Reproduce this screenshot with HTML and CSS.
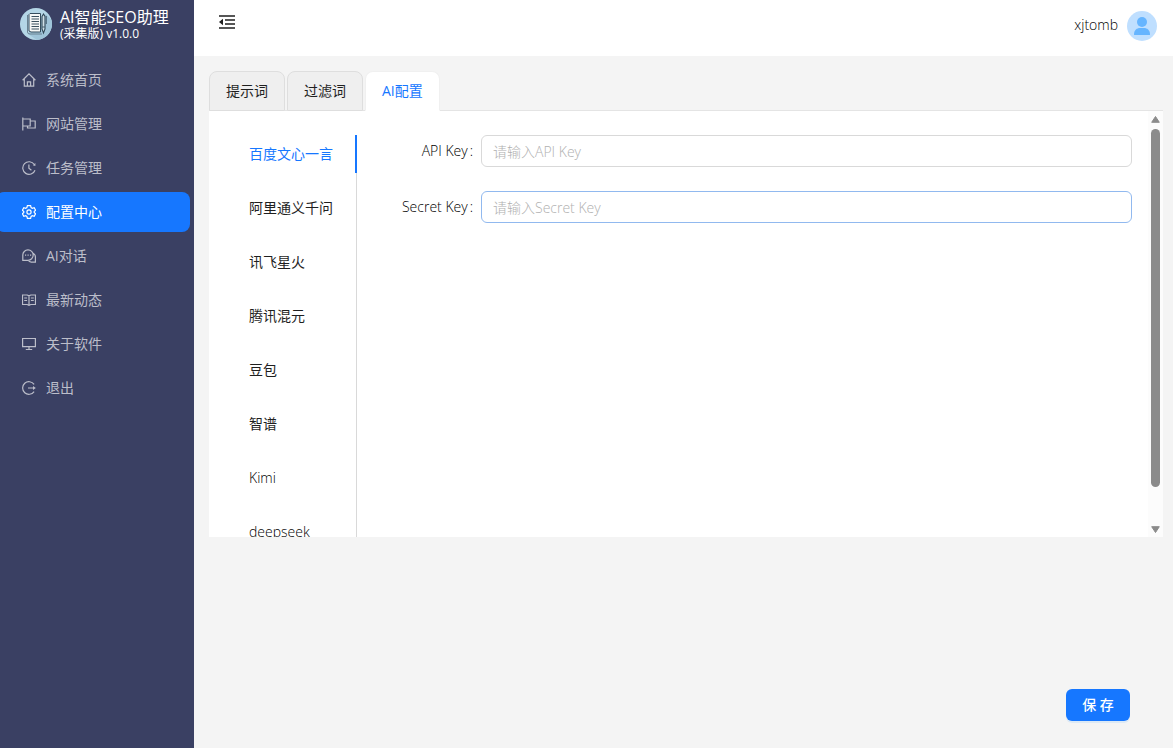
FILE: index.html
```html
<!DOCTYPE html>
<html lang="zh-CN">
<head>
<meta charset="utf-8">
<title>AI智能SEO助理</title>
<link rel="stylesheet" href="styles.css">
</head>
<body>
<div class="app">
  <aside class="sidebar">
    <div class="brand">
      <svg class="logo" viewBox="0 0 32 32" aria-hidden="true">
        <circle cx="16" cy="16" r="16" fill="#b4d6e6"/>
        <path d="M26 6l5.500 6A16 16 0 0 1 17 32l-9-6z" fill="#9fc4d9"/>
        <path d="M10 5.500h10.500V24H11l-2-1V6.500z" fill="#f6f8f7" stroke="#344c5c" stroke-width="1"/>
        <path d="M7.500 7v17q0 2 2.500 2h12" fill="none" stroke="#6b8291" stroke-width="1"/>
        <path d="M11.500 8.500h7.500M11.500 11h7.500M11.500 13.500h7.500M11.500 16h7.500M11.500 18.500h7.500M11.500 21h7.500" stroke="#3c5260"/>
        <path d="M22 8.500L23.500 6 25 8.500V21l-1.500 4L22 21z" fill="#cfe0e8" stroke="#2f4655" stroke-width="1.100"/>
        <path d="M26.300 8v8M22 19h3" stroke="#455f70"/>
      </svg>
      <div class="brand-text">
        <div class="brand-name">AI智能SEO助理</div>
        <div class="brand-version">(采集版) v1.0.0</div>
      </div>
    </div>
    <nav class="menu">
      <a class="menu-item" href="#home">
        <svg class="icon" viewBox="0 0 14 14"><path d="M.6 7.200L7 .9l6.400 6.300M2.300 6v7.200h9.400V6M5.400 13V8.800h3.200V13"/></svg>系统首页</a>
      <a class="menu-item" href="#sites">
        <svg class="icon" viewBox="0 0 14 14"><path d="M.8.500v13M.8 2h7.400v7H.8M8.200 4h5v7H5.500V9"/></svg>网站管理</a>
      <a class="menu-item" href="#tasks">
        <svg class="icon" viewBox="0 0 14 14"><path d="M12.300 3.500A6.300 6.300 0 1 0 13 9.200M6.900 3.500v3.800l2.500 1.900"/><path class="fill" d="M13.400 1.900v3.200l-2.600-.8z"/></svg>任务管理</a>
      <a class="menu-item active" href="#config">
        <svg class="icon" viewBox="0 0 14 14"><path d="M5.400.6h3.200l.5 2 1.200.7 1.900-.6 1.400 2.500-1.400 1.300v1l1.400 1.300-1.400 2.500-1.900-.6-1.200.7-.5 2H5.400l-.5-2-1.200-.7-1.900.6L.4 8.800l1.400-1.300v-1L.4 5.200l1.400-2.500 1.900.6 1.200-.7z"/><circle cx="7" cy="7" r="2.100"/></svg>配置中心</a>
      <a class="menu-item" href="#chat">
        <svg class="icon" viewBox="0 0 14 14"><path d="M.8 11.300V6.200a5.200 5.200 0 1 1 5.200 5.100H.8zM11.200 4.300a4.300 4.300 0 0 1 2.200 4v4.800H9.200q-2 0-3-1.800"/><path d="M3 6.200h1.200M5.500 6.200h1.200M8 6.200h1.200"/></svg>AI对话</a>
      <a class="menu-item" href="#news">
        <svg class="icon" viewBox="0 0 14 14"><path d="M.5 2h4.700L7 2.800 8.800 2h4.700v9.500H8.800L7 12.300l-1.800-.8H.5zM7 2.800v9.500M2.200 5h2.900M2.200 7.500h2.900M8.900 5h2.900M8.900 7.500h2.900"/></svg>最新动态</a>
      <a class="menu-item" href="#about">
        <svg class="icon" viewBox="0 0 14 14"><path d="M.6 1.500h12.800v8.200H.6zM7 9.700v2.800M3.800 12.500h6.400"/></svg>关于软件</a>
      <a class="menu-item" href="#exit">
        <svg class="icon" viewBox="0 0 14 14"><path d="M12.100 3.400a6.300 6.300 0 1 0 0 7.200M6 7h6"/><path class="fill" d="M11 5l2.800 2-2.800 2z"/></svg>退出</a>
    </nav>
  </aside>
  <div class="main">
    <header class="topbar">
      <button class="fold" type="button" aria-label="收起菜单">
        <svg viewBox="0 0 16 14"><path d="M0 1h16M6 5h10M6 9h10M0 13h16" stroke="#1f1f1f" stroke-width="1.400"/><path d="M4 3.800v6.400L0 7z" fill="#1f1f1f"/></svg>
      </button>
      <div class="user">
        <span class="user-name">xjtomb</span>
        <svg class="avatar" viewBox="0 0 30 30" aria-hidden="true"><circle cx="15" cy="15" r="15" fill="#bfdfff"/><circle cx="15" cy="11" r="5" fill="#66b5ff"/><path d="M7 23.500c0-4.500 3-6.500 6-6.500h4c3 0 6 2 6 6.500q0 .5-.5.500h-15q-.5 0-.5-.5z" fill="#66b5ff"/></svg>
      </div>
    </header>
    <main class="content">
      <div class="tabs" role="tablist">
        <button class="tab" type="button" role="tab">提示词</button>
        <button class="tab" type="button" role="tab">过滤词</button>
        <button class="tab current" type="button" role="tab" aria-selected="true">AI配置</button>
      </div>
      <section class="panel">
        <div class="panel-body">
          <div class="providers" role="tablist">
            <button class="provider chosen" type="button" role="tab" aria-selected="true">百度文心一言</button>
            <button class="provider" type="button" role="tab">阿里通义千问</button>
            <button class="provider" type="button" role="tab">讯飞星火</button>
            <button class="provider" type="button" role="tab">腾讯混元</button>
            <button class="provider" type="button" role="tab">豆包</button>
            <button class="provider" type="button" role="tab">智谱</button>
            <button class="provider light" type="button" role="tab">Kimi</button>
            <button class="provider light" type="button" role="tab">deepseek</button>
          </div>
          <form class="form" id="keys">
            <div class="field">
              <label class="light" for="api-key">API Key<span class="colon">:</span></label>
              <input id="api-key" type="text" placeholder="请输入API Key">
            </div>
            <div class="field">
              <label class="light" for="secret-key">Secret Key<span class="colon">:</span></label>
              <input class="highlight" id="secret-key" type="text" placeholder="请输入Secret Key">
            </div>
          </form>
        </div>
        <div class="scrollbar" aria-hidden="true">
          <svg class="arrow" viewBox="0 0 9 7"><path d="M4.500.5L8.300 6.300H.7z"/></svg>
          <div class="track"><div class="thumb"></div></div>
          <svg class="arrow" viewBox="0 0 9 7"><path d="M4.500 6.500L.7.700h7.600z"/></svg>
        </div>
      </section>
      <div class="actions"><button class="save" type="submit" form="keys">保 存</button></div>
    </main>
  </div>
</div>
</body>
</html>
```
FILE: styles.css
```css
* { box-sizing: border-box; }
body {
  margin: 0;
  font-family: "Open Sans", "Noto Sans CJK SC", sans-serif;
  font-size: 14px;
  line-height: 22px;
  color: #1f1f1f;
}
button, input { font: inherit; color: inherit; }
button { border: 0; background: none; padding: 0; cursor: pointer; }
.app { display: flex; min-height: 100vh; background: #f4f4f4; }
.light, .user-name { font-weight: 300; color: #000; }

.sidebar { flex: 0 0 194px; background: #3a4063; overflow: hidden; }
.brand { display: flex; gap: 8px; height: 48px; padding: 8px 0 0 20px; color: #fff; white-space: nowrap; }
.logo { width: 32px; height: 32px; }
.brand-name { font-size: 16px; line-height: 18px; }
.brand-version { font-size: 12px; line-height: 16px; }
.menu { display: flex; flex-direction: column; gap: 4px; padding: 12px 4px 0 0; margin-left: -4px; }
.menu-item {
  display: flex; align-items: center; gap: 10px;
  height: 40px; padding-left: 26px;
  border-radius: 8px; color: #bcbeca; text-decoration: none;
}
.menu-item.active { background: #1677ff; color: #fff; }
.icon { width: 14px; height: 14px; fill: none; stroke: currentColor; stroke-width: 1.2; }
.icon .fill { fill: currentColor; stroke: none; }

.main { flex: 1; min-width: 0; display: flex; flex-direction: column; }
.topbar {
  display: flex; justify-content: space-between; align-items: center;
  height: 56px; padding: 0 16px 4px 25px; background: #fff;
}
.fold { display: flex; padding-bottom: 8px; }
.fold svg { width: 16px; height: 14px; }
.user { display: flex; align-items: center; gap: 9px; }
.user-name { padding-bottom: 3px; }
.avatar { width: 30px; height: 30px; }

.content { flex: 1; display: flex; flex-direction: column; padding: 15px 10px 27px 15px; }
.tabs { display: flex; gap: 2px; height: 40px; border-bottom: 1px solid #e4e4e4; }
.tab {
  height: 40px; padding: 0 16px;
  border: 1px solid #dedede; border-radius: 8px 8px 0 0; background: #efefef;
}
.tab.current { border-color: #f0f0f0 #f0f0f0 #fff; background: #fff; color: #1677ff; }

.panel { display: flex; height: calc(100vh - 322px); background: #fff; overflow: hidden; }
.panel-body { flex: 1; display: flex; align-items: flex-start; padding: 24px 16px; }
.providers { display: flex; flex-direction: column; gap: 16px; border-right: 1px solid #d9d9d9; }
.provider { height: 38px; padding: 0 23px 0 24px; text-align: left; }
.provider.chosen { margin-right: -1px; padding-right: 22px; border-right: 2px solid #1677ff; color: #1677ff; }
.form { flex: 1; display: flex; flex-direction: column; gap: 24px; padding-left: 24px; }
.field { display: grid; grid-template-columns: 100px 1fr; align-items: center; }
.field label { text-align: right; padding-right: 8px; }
.colon { margin-left: 2px; }
.field input {
  width: 100%; height: 32px; padding: 4px 11px;
  border: 1px solid #d9d9d9; border-radius: 6px; background: #fff; outline: 0;
}
.field input.highlight { border-color: #91b9ef; }
.field input::placeholder { color: #b0b0b0; font-weight: 300; opacity: 1; }

.scrollbar {
  flex: 0 0 15px; display: flex; flex-direction: column; align-items: center; gap: 6px;
  padding: 5px 0 4px; background: #fcfcfc;
}
.arrow { width: 9px; height: 7px; fill: #8b8b8b; stroke: #8b8b8b; stroke-linejoin: round; }
.track { flex: 1; display: flex; align-items: flex-start; }
.thumb { width: 9px; height: 91.5%; border-radius: 5px; background: #8b8b8b; }

.actions { display: flex; justify-content: flex-end; margin-top: auto; padding-right: 33px; }
.save {
  width: 64px; height: 32px; border-radius: 6px;
  background: #1677ff; color: #fff; font-weight: 500; box-shadow: 0 2px 0 #dce9f5;
}
```
